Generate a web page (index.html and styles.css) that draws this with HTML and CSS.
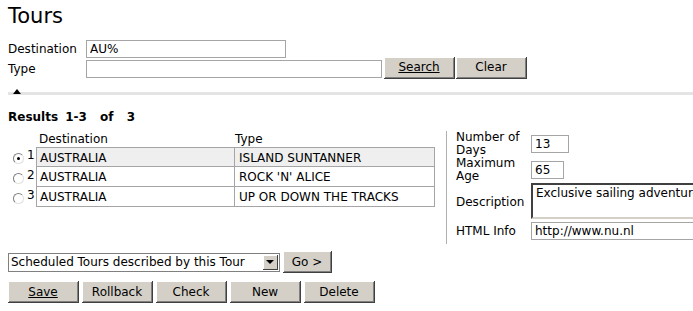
FILE: index.html
```html
<!DOCTYPE html>
<html lang="en">
<head>
    <meta name="viewport" content="width=device-width, initial-scale=1">
    <link rel="stylesheet" href="styles.css">
</head>
<body>

<div class="page">
    <h1 class="title">Tours</h1>

    <!-- Search criteria -->
    <div class="criteria">
        <div class="crit-row">
            <label class="crit-label">Destination</label>
            <input type="text" class="field dest-field" value="AU%">
        </div>
        <div class="crit-row">
            <label class="crit-label">Type</label>
            <input type="text" class="field type-field" value="">
            <button class="btn search-btn"><u>Search</u></button>
            <button class="btn search-btn">Clear</button>
        </div>
    </div>

    <div class="separator">
        <span class="collapse-icon"></span>
    </div>

    <div class="results-title">
        Results <span class="range">1-3</span> <span class="of">of</span> <span class="total">3</span>
    </div>

    <div class="results">
        <!-- Result list -->
        <div class="result-list">
            <div class="list-head">
                <span class="col-dest">Destination</span>
                <span class="col-type">Type</span>
            </div>
            <div class="list-row selected">
                <span class="pick"><input type="radio" name="tour" class="radio" checked><sup>1</sup></span>
                <span class="cell col-dest">AUSTRALIA</span>
                <span class="cell col-type">ISLAND SUNTANNER</span>
            </div>
            <div class="list-row">
                <span class="pick"><input type="radio" name="tour" class="radio"><sup>2</sup></span>
                <span class="cell col-dest">AUSTRALIA</span>
                <span class="cell col-type">ROCK 'N' ALICE</span>
            </div>
            <div class="list-row">
                <span class="pick"><input type="radio" name="tour" class="radio"><sup>3</sup></span>
                <span class="cell col-dest">AUSTRALIA</span>
                <span class="cell col-type">UP OR DOWN THE TRACKS</span>
            </div>
        </div>

        <!-- Detail of selected tour -->
        <div class="detail">
            <label class="detail-label">Number of Days</label>
            <input type="text" class="field days-field" value="13">

            <label class="detail-label">Maximum Age</label>
            <input type="text" class="field age-field" value="65">

            <label class="detail-label">Description</label>
            <textarea class="desc-field">Exclusive sailing adventure</textarea>

            <label class="detail-label">HTML Info</label>
            <input type="text" class="field info-field" value="http://www.nu.nl">
        </div>
    </div>

    <div class="navigate">
        <span class="select-wrap">
            <select class="nav-select">
                <option>Scheduled Tours described by this Tour</option>
            </select>
            <span class="select-arrow"></span>
        </span>
        <button class="btn go-btn">Go &gt;</button>
    </div>

    <div class="actions">
        <button class="btn action-btn"><u>Save</u></button>
        <button class="btn action-btn">Rollback</button>
        <button class="btn action-btn">Check</button>
        <button class="btn action-btn">New</button>
        <button class="btn action-btn">Delete</button>
    </div>
</div>

</body>
</html>
```

FILE: styles.css
```css
html {
    overflow: hidden;
}

body {
    margin: 0;
    font-family: 'DejaVu Sans', Verdana, sans-serif;
    font-size: 12px;
    color: #000;
    background-color: #fff;
}

.page {
    width: 780px;
    padding: 0 0 0 8px;
}

.title {
    margin: 0;
    padding-top: 3px;
    font-size: 21px;
    font-weight: normal;
    line-height: 26px;
}

/* Search criteria */
.criteria {
    margin-top: 10px;
}

.crit-row {
    display: flex;
    align-items: center;
    height: 20px;
}

.crit-label {
    width: 78px;
}

.field {
    box-sizing: border-box;
    height: 18px;
    padding: 0 3px;
    border: 1px solid #a5a5a5;
    font-family: inherit;
    font-size: 12px;
    color: #000;
    outline: none;
}

.dest-field {
    width: 200px;
}

.type-field {
    width: 296px;
}

/* Windows classic buttons */
.btn {
    box-sizing: border-box;
    height: 22px;
    padding: 0;
    background-color: #d4d0c8;
    border: none;
    border-right: 1px solid #404040;
    border-bottom: 1px solid #404040;
    box-shadow: inset 1px 1px #fff, inset -1px -1px #808080;
    font-family: inherit;
    font-size: 12px;
    color: #000;
    cursor: pointer;
}

.btn u {
    text-decoration: underline;
}

.search-btn {
    width: 71px;
    margin-left: 2px;
    margin-top: -3px;
}

.search-btn + .search-btn {
    margin-left: 1px;
}

/* Collapse bar */
.separator {
    position: relative;
    height: 3px;
    margin-top: 13px;
    background-color: #e4e4e4;
}

.collapse-icon {
    position: absolute;
    left: 5px;
    top: -3px;
    width: 0;
    height: 0;
    border-left: 4px solid transparent;
    border-right: 4px solid transparent;
    border-bottom: 5px solid #000;
}

.results-title {
    margin-top: 15px;
    font-weight: bold;
    word-spacing: 3px;
}

.of {
    margin: 0 6px;
}

/* Results */
.results {
    display: flex;
    align-items: flex-start;
    margin-top: 2px;
}

.result-list {
    width: 427px;
    padding-top: 6px;
}

.list-head {
    display: flex;
    height: 15px;
    padding-left: 31px;
}

.list-head .col-dest {
    width: 196px;
}

.list-row {
    display: flex;
    height: 20px;
}

.pick {
    display: flex;
    align-items: center;
    width: 28px;
}

.pick sup {
    align-self: flex-start;
    font-size: 12px;
    line-height: 12px;
    margin-top: 2px;
    margin-left: 3px;
}

.radio {
    appearance: none;
    box-sizing: border-box;
    width: 11px;
    height: 11px;
    margin: 3px 0 0 5px;
    border-radius: 50%;
    border: 1px solid;
    border-color: #808080 #e0e0e0 #e0e0e0 #808080;
    background-color: #fff;
    position: relative;
}

.radio:checked::after {
    content: '';
    position: absolute;
    left: 3px;
    top: 3px;
    width: 3px;
    height: 3px;
    border-radius: 50%;
    background-color: #000;
}

.cell {
    box-sizing: border-box;
    height: 20px;
    padding: 2px 3px 0;
    border: 1px solid #a5a5a5;
    border-top: none;
    line-height: 16px;
}

.list-row:nth-child(2) .cell {
    border-top: 1px solid #a5a5a5;
}

.list-row .col-dest {
    width: 198px;
    border-right: none;
}

.list-row .col-type {
    width: 201px;
    padding-left: 4px;
}

.list-row.selected .cell {
    background-color: #efefef;
}

/* Detail form */
.detail {
    display: grid;
    grid-template-columns: 75px 250px;
    align-items: center;
    margin-top: 5px;
    margin-left: 11px;
    padding-left: 9px;
    padding-bottom: 4px;
    border-left: 1px solid #b0b0b0;
    row-gap: 0;
}

.detail-label {
    line-height: 13px;
}

.days-field {
    width: 38px;
}

.age-field {
    width: 33px;
}

.desc-field {
    box-sizing: border-box;
    width: 230px;
    height: 36px;
    margin: 0 0 3px;
    padding: 1px 3px;
    border: 2px solid;
    border-color: #404040 #d4d0c8 #d4d0c8 #404040;
    font-family: inherit;
    font-size: 12px;
    resize: none;
    overflow: hidden;
    outline: none;
}

.info-field {
    width: 230px;
}

/* Navigation to related objects */
.navigate {
    display: flex;
    align-items: center;
    margin-top: 7px;
}

.select-wrap {
    position: relative;
    display: inline-block;
}

.nav-select {
    appearance: none;
    box-sizing: border-box;
    width: 272px;
    height: 19px;
    padding: 0 18px 0 2px;
    border: 1px solid #808080;
    background-color: #fff;
    font-family: inherit;
    font-size: 12px;
    color: #000;
    outline: none;
}

.select-arrow {
    position: absolute;
    right: 2px;
    top: 2px;
    width: 15px;
    height: 15px;
    box-sizing: border-box;
    background-color: #d4d0c8;
    border-right: 1px solid #404040;
    border-bottom: 1px solid #404040;
    box-shadow: inset 1px 1px #fff;
}

.select-arrow::after {
    content: '';
    position: absolute;
    left: 3px;
    top: 5px;
    border-left: 4px solid transparent;
    border-right: 4px solid transparent;
    border-top: 4px solid #000;
}

.go-btn {
    width: 49px;
    margin-left: 3px;
}

/* Action buttons */
.actions {
    display: flex;
    gap: 3px;
    margin-top: 8px;
}

.action-btn {
    width: 71px;
}
```
